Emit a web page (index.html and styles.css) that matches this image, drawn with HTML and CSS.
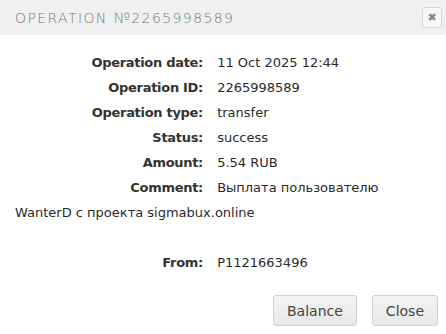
FILE: index.html
```html
<!DOCTYPE html>
<html>
	<head>
		<title>Operation №2265998589</title>
		<link rel="stylesheet" href="styles.css">
	</head>
	<body>
		<div class="dialog">
			<div class="header">
				<span class="title">Operation №2265998589</span>
				<span class="close">&#10006;</span>
			</div>
			<div class="content">
				<span class="label">Operation date:</span> 11 Oct 2025 12:44<br>
				<span class="label">Operation ID:</span> 2265998589<br>
				<span class="label">Operation type:</span> transfer<br>
				<span class="label">Status:</span> success<br>
				<span class="label">Amount:</span> 5.54 RUB<br>
				<span class="label">Comment:</span> Выплата пользователю WanterD с проекта sigmabux.online<br>
				<br>
				<span class="label">From:</span> P1121663496<br>
			</div>
			<div class="buttons">
				<button class="btn">Balance</button>
				<button class="btn">Close</button>
			</div>
		</div>
	</body>
</html>
```

FILE: styles.css
```css
body {
	margin: 0;
	background: #fff;
	font-family: "DejaVu Sans", sans-serif;
	color: #2a2a2a;
}
.dialog {
	width: 446px;
	height: 334px;
	display: flex;
	flex-direction: column;
}
.header {
	height: 35px;
	background: #f0f0f0;
	display: flex;
	align-items: center;
	justify-content: space-between;
	padding: 0 4px 0 15px;
}
.title {
	font-family: "DejaVu Sans", sans-serif;
	font-weight: 200;
	font-size: 14px;
	letter-spacing: 1.4px;
	text-transform: uppercase;
	color: #777;
}
.close {
	width: 18px;
	height: 19px;
	border: 1px solid #d8d8d8;
	border-radius: 3px;
	background: #f7f7f7;
	color: #888;
	font-size: 11px;
	display: flex;
	align-items: center;
	justify-content: center;
}
.content {
	padding: 15px 15px 0;
	font-size: 13px;
	line-height: 25px;
	flex: 1;
}
.label {
	display: inline-block;
	width: 188px;
	margin-right: 10px;
	text-align: right;
	font-weight: bold;
	letter-spacing: -0.3px;
	color: #333;
}
.buttons {
	display: flex;
	justify-content: flex-end;
	gap: 15px;
	padding: 0 8px 8px;
}
.btn {
	font-family: "DejaVu Sans", sans-serif;
	font-size: 14px;
	color: #444;
	background: linear-gradient(#f4f4f4, #e8e8e8);
	border: 1px solid #d0d0d0;
	border-radius: 3px;
	height: 31px;
	padding: 0 13px;
}
```
